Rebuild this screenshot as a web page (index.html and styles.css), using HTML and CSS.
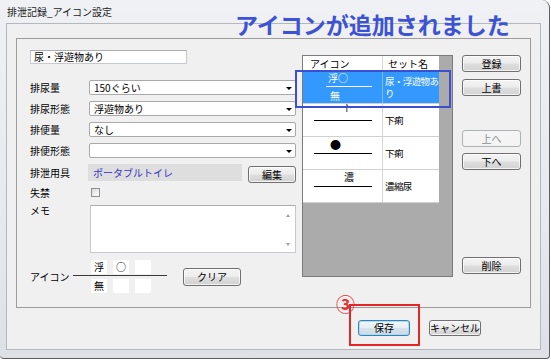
FILE: index.html
```html
<!DOCTYPE html>
<html lang="ja">
<head>
<meta charset="utf-8">
<title>排泄記録_アイコン設定</title>
<link rel="stylesheet" href="styles.css">
</head>
<body>
<div class="window">
  <div class="titlebar">排泄記録_アイコン設定</div>
  <div class="client">
    <div class="group">
      <div class="form">
        <div class="txt">尿・浮遊物あり</div>
        <div class="r sel-row first">
          <div class="lbl">排尿量</div>
          <div class="sel"><span>150ぐらい</span><span class="arr"></span></div>
        </div>
        <div class="r sel-row">
          <div class="lbl">排尿形態</div>
          <div class="sel"><span>浮遊物あり</span><span class="arr"></span></div>
        </div>
        <div class="r sel-row">
          <div class="lbl">排便量</div>
          <div class="sel"><span>なし</span><span class="arr"></span></div>
        </div>
        <div class="r sel-row">
          <div class="lbl">排便形態</div>
          <div class="sel"><span></span><span class="arr"></span></div>
        </div>
        <div class="r tool-row">
          <div class="lbl">排泄用具</div>
          <div class="gray">ポータブルトイレ</div>
          <div class="btn edit">編集</div>
        </div>
        <div class="r chk-row">
          <div class="lbl">失禁</div>
          <div class="chk"></div>
        </div>
        <div class="r memo-row">
          <div class="lbl memo-lbl">メモ</div>
          <div class="memo">
            <div class="scroll"><span class="up"></span><span class="down"></span></div>
          </div>
        </div>
        <div class="r icon-row">
          <div class="lbl icon-lbl">アイコン</div>
          <div class="comp">
            <div class="comp-row">
              <div class="box">浮</div>
              <div class="box">○</div>
              <div class="box"></div>
            </div>
            <div class="comp-line"></div>
            <div class="comp-row">
              <div class="box">無</div>
              <div class="box"></div>
              <div class="box"></div>
            </div>
          </div>
          <div class="btn clear">クリア</div>
        </div>
      </div>

      <div class="list">
        <div class="lh">
          <div class="c1 h1">アイコン</div>
          <div class="c2 h2">セット名</div>
        </div>
        <div class="row selected">
          <div class="c1 ic">
            <div class="ic-t t1">浮○</div>
            <div class="ic-ln l1"></div>
            <div class="ic-b">無</div>
          </div>
          <div class="c2 name"><div>尿・浮遊物あ</div><div>り</div></div>
        </div>
        <div class="row">
          <div class="c1 ic">
            <div class="ic-t t2">下</div>
            <div class="ic-ln l2"></div>
          </div>
          <div class="c2 name">下痢</div>
        </div>
        <div class="row">
          <div class="c1 ic">
            <div class="ic-t t3">●</div>
            <div class="ic-ln l3"></div>
          </div>
          <div class="c2 name">下痢</div>
        </div>
        <div class="row">
          <div class="c1 ic">
            <div class="ic-t t4">濃</div>
            <div class="ic-ln l4"></div>
          </div>
          <div class="c2 name">濃縮尿</div>
        </div>
      </div>

      <div class="side">
        <div class="btn">登録</div>
        <div class="btn s-over">上書</div>
        <div class="btn disabled s-up">上へ</div>
        <div class="btn s-down">下へ</div>
        <div class="btn s-del">削除</div>
      </div>
    </div>
    <div class="footer">
      <div class="btn fbtn default">保存</div>
      <div class="btn fbtn">キャンセル</div>
    </div>
  </div>

  <div class="ann-title">アイコンが追加されました</div>
  <div class="ann-blue"></div>
  <div class="ann-red"></div>
  <div class="ann-num">③</div>
</div>
</body>
</html>
```

FILE: styles.css
```css
* { box-sizing: border-box; }
html, body { margin: 0; padding: 0; background: #ffffff; }
body {
  font-family: "Noto Sans CJK JP", "Noto Sans", sans-serif;
  font-size: 10px;
  color: #000;
}

.window {
  position: relative;
  width: 550px;
  height: 359px;
  background: linear-gradient(180deg, #eff1f4 0%, #e6e9ed 60%, #dde1e6 100%);
  border-right: 1px solid #5b5e62;
  border-bottom: 1px solid #5b5e62;
  border-top-right-radius: 8px;
  border-bottom-right-radius: 4px;
  border-bottom-left-radius: 4px;
  padding-left: 6px;
  display: flex;
  flex-direction: column;
  overflow: hidden;
}

.titlebar {
  height: 23px;
  padding-left: 1px;
  line-height: 24px;
  font-size: 10px;
  color: #1c1c1c;
  white-space: nowrap;
}

.client {
  width: 535px;
  height: 327px;
  border: 1px solid #b4b8be;
  background: #f0f0f0;
  padding: 14px 0 0 9px;
  display: flex;
  flex-direction: column;
}

.group {
  width: 515px;
  height: 270px;
  border: 1px solid #9c9c9c;
  display: flex;
  align-items: flex-start;
}

/* ---------- left form ---------- */
.form {
  margin-left: 13px;
  padding-top: 11px;
  width: 266px;
  display: flex;
  flex-direction: column;
}
.r { display: flex; align-items: center; }
.lbl {
  width: 58px;
  flex: none;
  line-height: 11px;
  white-space: nowrap;
}

.txt {
  width: 157px;
  height: 14px;
  border: 1px solid #c6c9cf;
  border-top-color: #abadb3;
  background: #fff;
  padding-left: 3px;
  line-height: 12px;
  white-space: nowrap;
}

.sel-row { height: 21px; align-items: flex-start; }
.sel-row .lbl { line-height: 15px; }
.sel-row.first { margin-top: 16px; }
.sel {
  margin-left: 1px;
  width: 208px;
  height: 15px;
  border: 1px solid #a9a9a9;
  border-radius: 2px;
  background: #fff;
  padding: 0 3px 0 4px;
  line-height: 13px;
  display: flex;
  align-items: center;
  justify-content: space-between;
  white-space: nowrap;
}
.arr {
  width: 0;
  height: 0;
  border-left: 3px solid transparent;
  border-right: 3px solid transparent;
  border-top: 3px solid #000;
  margin-top: 2px;
}

.tool-row { height: 20px; align-items: flex-start; }
.tool-row .lbl { line-height: 17px; }
.gray {
  width: 154px;
  height: 17px;
  background: #dedede;
  color: #3434c8;
  padding-left: 5px;
  line-height: 17px;
  white-space: nowrap;
}
.edit {
  margin-left: 6px;
  margin-top: 2px;
  width: 48px;
  height: 17px;
}

.chk-row { height: 17px; }
.chk {
  margin-left: 3px;
  width: 9px;
  height: 9px;
  border: 1px solid #8f8f8f;
  background: linear-gradient(135deg, #dcdcdc, #fbfbfb);
}

.memo-row { align-items: flex-start; }
.memo-lbl { margin-top: 4px; }
.memo {
  margin-top: 4px;
  margin-left: 2px;
  width: 206px;
  height: 48px;
  border: 1px solid #c6c9cf;
  border-top-color: #abadb3;
  background: #fff;
  display: flex;
  justify-content: flex-end;
}
.scroll {
  width: 15px;
  display: flex;
  flex-direction: column;
  align-items: center;
  justify-content: space-between;
  padding: 8px 0 6px;
}
.up, .down {
  width: 0;
  height: 0;
  border-left: 2px solid transparent;
  border-right: 2px solid transparent;
}
.up { border-bottom: 3px solid #a0a0a0; }
.down { border-top: 3px solid #a0a0a0; }

.icon-row { margin-top: 7px; }
.icon-lbl { width: 43px; }
.comp {
  width: 94px;
  display: flex;
  flex-direction: column;
}
.comp-row {
  display: flex;
  gap: 6px;
  padding-left: 18px;
  height: 14px;
}
.box {
  width: 16px;
  height: 14px;
  background: #fff;
  text-align: center;
  line-height: 14px;
}
.comp-line {
  height: 1px;
  background: #3a3a3a;
  margin: 1px 0 3px;
}
.clear {
  margin-left: 16px;
  width: 58px;
  height: 18px;
}

/* ---------- buttons ---------- */
.btn {
  border: 1px solid #707070;
  border-radius: 3px;
  background: linear-gradient(180deg, #f4f4f4 0%, #ececec 48%, #dedede 52%, #d2d2d2 100%);
  box-shadow: inset 0 0 0 1px rgba(255,255,255,0.7);
  display: flex;
  align-items: center;
  justify-content: center;
  line-height: 12px;
  white-space: nowrap;
  color: #000;
}
.btn.disabled {
  border-color: #adb2b5;
  background: #f4f4f4;
  color: #8d8d8d;
  box-shadow: none;
}

/* ---------- list ---------- */
.list {
  margin-left: 6px;
  margin-top: 16px;
  width: 151px;
  height: 222px;
  border: 1px solid #7b7b7b;
  background: #ababab;
  display: flex;
  flex-direction: column;
}
.lh {
  display: flex;
  width: 136px;
  height: 15px;
  background: #fff;
  line-height: 15px;
}
.c1 { width: 80px; flex: none; border-right: 1px solid #d4d4d4; }
.c2 { width: 56px; flex: none; }
.h1 { padding-left: 7px; white-space: nowrap; }
.h2 { padding-left: 5px; white-space: nowrap; }

.row {
  display: flex;
  width: 136px;
  height: 33px;
  background: #fff;
  border-bottom: 1px solid #d0d0d0;
}
.row.selected { background: #3399ff; color: #fff; }
.row.selected .c1 { border-right-color: #7dbdff; }

.ic {
  height: 32px;
  overflow: hidden;
  display: flex;
  flex-direction: column;
}
.ic-t, .ic-b {
  height: 14px;
  line-height: 14px;
  white-space: nowrap;
  flex: none;
}
.ic-ln { height: 1px; background: #000; flex: none; }

.t1 { margin-top: 0; padding-left: 25px; }
.l1 { margin-top: 1px; margin-left: 23px; width: 46px; background: #fff; }
.ic-b { margin-top: 2px; padding-left: 27px; }

.t2 { margin-top: -4px; padding-left: 39px; }
.l2 { margin-top: 6px; margin-left: 11px; width: 58px; }

.t3 { margin-top: 0; padding-left: 27px; font-size: 11px; }
.l3 { margin-top: 2px; margin-left: 11px; width: 58px; }

.t4 { margin-top: 0; padding-left: 41px; }
.l4 { margin-top: 2px; margin-left: 11px; width: 58px; }

.name {
  display: flex;
  flex-direction: column;
  justify-content: center;
  padding-left: 2px;
  line-height: 12px;
  font-size: 9.5px;
  letter-spacing: -0.6px;
  white-space: nowrap;
  overflow: hidden;
}

/* ---------- side buttons ---------- */
.side {
  margin-left: 9px;
  margin-top: 16px;
  width: 59px;
  display: flex;
  flex-direction: column;
}
.side .btn { height: 17px; }
.s-over { margin-top: 7px; }
.s-up { margin-top: 34px; }
.s-down { margin-top: 6px; }
.s-del { margin-top: 87px; }

/* ---------- footer ---------- */
.footer {
  display: flex;
  justify-content: flex-end;
  gap: 19px;
  margin-top: 12px;
  padding-right: 59px;
}
.fbtn { width: 52px; height: 16px; }
.fbtn.default {
  border-color: #3c7fb1;
  box-shadow: inset 0 0 0 1px #a9dcf6;
  background: linear-gradient(180deg, #f1f7fb 0%, #e6eff5 48%, #d6e3ec 52%, #cbdbe6 100%);
}

/* ---------- annotations (overlay) ---------- */
.ann-title {
  position: absolute;
  left: 235px;
  top: 13px;
  font-size: 23px;
  line-height: 23px;
  font-weight: 700;
  color: #3b53d4;
  white-space: nowrap;
}
.ann-blue {
  position: absolute;
  left: 295px;
  top: 70px;
  width: 156px;
  height: 38px;
  border: 2px solid #3c4fd2;
}
.ann-red {
  position: absolute;
  left: 349px;
  top: 304px;
  width: 71px;
  height: 42px;
  border: 2px solid #e32626;
}
.ann-num {
  position: absolute;
  left: 336px;
  top: 294px;
  font-size: 19px;
  line-height: 19px;
  font-weight: 700;
  color: #e53030;
}
```
